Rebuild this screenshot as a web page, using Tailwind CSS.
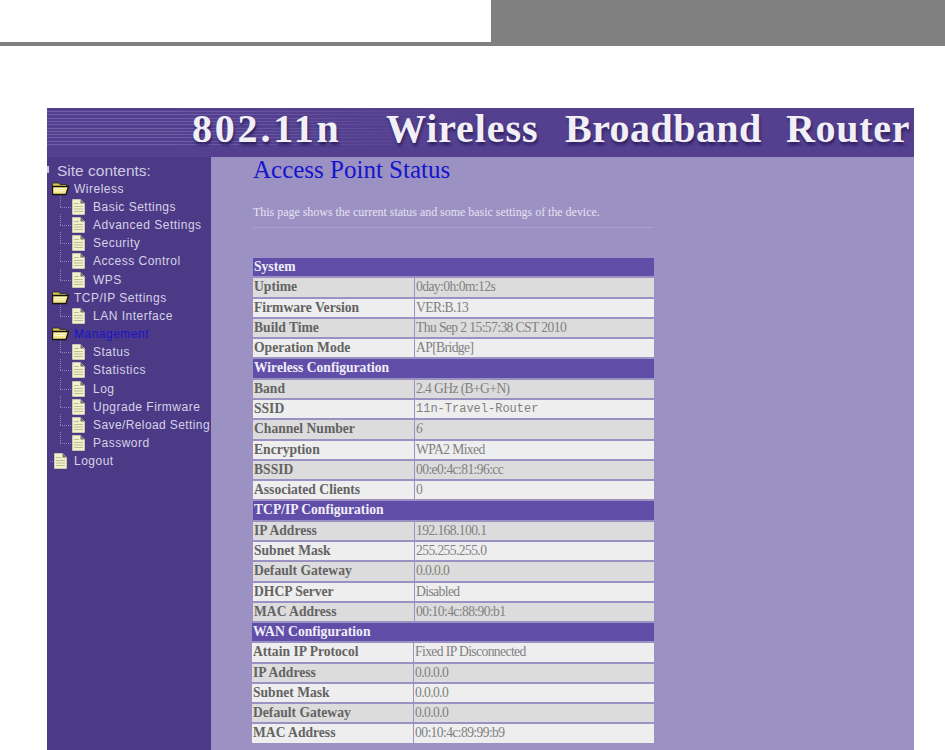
<!DOCTYPE html>
<html lang="en">
  <head>
    <meta charset="UTF-8" />
    <title>Access Point Status</title>
    <script src="https://cdn.jsdelivr.net/npm/@tailwindcss/browser@4"></script>
  </head>
  <body class="bg-white h-[750px] w-[945px] overflow-hidden">
    <svg class="hidden">
      <defs>
        <g id="folder">
          <path d="M0.500 1h6l1.500 1.500h6.500v3H0.500z" fill="#d8c45a" stroke="#2a2410" stroke-width="0.800" />
          <path d="M0.500 4.500h16l-2.500 8H0.500z" fill="#f4e68c" stroke="#17140a" stroke-width="1.300" />
          <path d="M2.500 6.500h11.500M2.500 8.500h10" stroke="#fff8d0" />
        </g>
        <g id="page">
          <path d="M0.500 0.500h8l4 4v11h-12z" fill="#f3f0cc" stroke="#e6e2c0" stroke-width="0.600" />
          <path d="M8.500 0.500v4h4z" fill="#6d6a60" />
          <path d="M2 4.500h5M2 7.500h9M2 10h9M2 12.500h9" stroke="#c0bc94" />
        </g>
      </defs>
    </svg>

    <div class="flex h-[46px]">
      <div class="w-[491px] border-b-4 border-[#808080]"></div>
      <div class="flex-1 bg-[#808080]"></div>
    </div>

    <div class="ml-[47px] mt-[62px] w-[867px] h-[642px] flex flex-col">
      <div class="h-[49px] bg-[#54408f] relative">
        <div class="absolute left-0 top-[3px] h-[36px] w-[420px] bg-[repeating-linear-gradient(180deg,#6f60a8_0px,#6f60a8_1px,transparent_1px,transparent_3.300px)] [mask-image:linear-gradient(90deg,#000_30%,transparent)]"></div>
        <div class="relative flex font-['Liberation_Serif',serif] font-bold text-[40px] leading-[46px] -mt-[2px] h-[46px] text-[#f2f0f6] whitespace-nowrap [text-shadow:1px_3px_3px_#2d2060]">
          <span class="ml-[145px] w-[194px] tracking-[2.800px]">802.11n</span>
          <span class="w-[179px] tracking-[0.900px]">Wireless</span>
          <span class="w-[221px] tracking-[0.450px]">Broadband</span>
          <span class="tracking-[0.700px]">Router</span>
        </div>
      </div>
      <div class="flex flex-1">
        <div class="w-[164px] relative bg-[#4c3a87] overflow-hidden font-['Liberation_Sans',sans-serif] text-[12px] text-[#d6d2e6] tracking-[0.500px] whitespace-nowrap pt-[5px]">
          <div class="absolute left-0 top-[9px] w-[2px] h-[7px] bg-[#cfcae4]"></div>
          <div class="pl-[10px] h-[16px] text-[15.500px] leading-[17px] font-light tracking-normal text-[#cfcae4]">Site contents:</div>

          <div class="flex items-center h-[18.200px] pl-[5px] mt-[1.500px]"><svg class="w-[22px] h-[14px] shrink-0" viewBox="0 0 22 14"><use href="#folder" /></svg>Wireless</div>
          <div class="flex items-center h-[18.200px] pl-[13px]"><svg class="w-[33px] h-[18px] shrink-0 overflow-visible" viewBox="0 0 33 18"><path d="M0.500 -2v12M0 9.500h12" stroke="#8d84b8" stroke-dasharray="1 1" /><use href="#page" x="12" y="1" /></svg>Basic Settings</div>
          <div class="flex items-center h-[18.200px] pl-[13px]"><svg class="w-[33px] h-[18px] shrink-0 overflow-visible" viewBox="0 0 33 18"><path d="M0.500 -2v12M0 9.500h12" stroke="#8d84b8" stroke-dasharray="1 1" /><use href="#page" x="12" y="1" /></svg>Advanced Settings</div>
          <div class="flex items-center h-[18.200px] pl-[13px]"><svg class="w-[33px] h-[18px] shrink-0 overflow-visible" viewBox="0 0 33 18"><path d="M0.500 -2v12M0 9.500h12" stroke="#8d84b8" stroke-dasharray="1 1" /><use href="#page" x="12" y="1" /></svg>Security</div>
          <div class="flex items-center h-[18.200px] pl-[13px]"><svg class="w-[33px] h-[18px] shrink-0 overflow-visible" viewBox="0 0 33 18"><path d="M0.500 -2v12M0 9.500h12" stroke="#8d84b8" stroke-dasharray="1 1" /><use href="#page" x="12" y="1" /></svg>Access Control</div>
          <div class="flex items-center h-[18.200px] pl-[13px]"><svg class="w-[33px] h-[18px] shrink-0 overflow-visible" viewBox="0 0 33 18"><path d="M0.500 -2v12M0 9.500h12" stroke="#8d84b8" stroke-dasharray="1 1" /><use href="#page" x="12" y="1" /></svg>WPS</div>

          <div class="flex items-center h-[18.200px] pl-[5px]"><svg class="w-[22px] h-[14px] shrink-0" viewBox="0 0 22 14"><use href="#folder" /></svg>TCP/IP Settings</div>
          <div class="flex items-center h-[18.200px] pl-[13px]"><svg class="w-[33px] h-[18px] shrink-0 overflow-visible" viewBox="0 0 33 18"><path d="M0.500 -2v12M0 9.500h12" stroke="#8d84b8" stroke-dasharray="1 1" /><use href="#page" x="12" y="1" /></svg>LAN Interface</div>

          <div class="flex items-center h-[18.200px] pl-[5px] text-[#1a14c8]"><svg class="w-[22px] h-[14px] shrink-0" viewBox="0 0 22 14"><use href="#folder" /></svg>Management</div>
          <div class="flex items-center h-[18.200px] pl-[13px]"><svg class="w-[33px] h-[18px] shrink-0 overflow-visible" viewBox="0 0 33 18"><path d="M0.500 -2v12M0 9.500h12" stroke="#8d84b8" stroke-dasharray="1 1" /><use href="#page" x="12" y="1" /></svg>Status</div>
          <div class="flex items-center h-[18.200px] pl-[13px]"><svg class="w-[33px] h-[18px] shrink-0 overflow-visible" viewBox="0 0 33 18"><path d="M0.500 -2v12M0 9.500h12" stroke="#8d84b8" stroke-dasharray="1 1" /><use href="#page" x="12" y="1" /></svg>Statistics</div>
          <div class="flex items-center h-[18.200px] pl-[13px]"><svg class="w-[33px] h-[18px] shrink-0 overflow-visible" viewBox="0 0 33 18"><path d="M0.500 -2v12M0 9.500h12" stroke="#8d84b8" stroke-dasharray="1 1" /><use href="#page" x="12" y="1" /></svg>Log</div>
          <div class="flex items-center h-[18.200px] pl-[13px]"><svg class="w-[33px] h-[18px] shrink-0 overflow-visible" viewBox="0 0 33 18"><path d="M0.500 -2v12M0 9.500h12" stroke="#8d84b8" stroke-dasharray="1 1" /><use href="#page" x="12" y="1" /></svg>Upgrade Firmware</div>
          <div class="flex items-center h-[18.200px] pl-[13px]"><svg class="w-[33px] h-[18px] shrink-0 overflow-visible" viewBox="0 0 33 18"><path d="M0.500 -2v12M0 9.500h12" stroke="#8d84b8" stroke-dasharray="1 1" /><use href="#page" x="12" y="1" /></svg><span class="tracking-[0.400px]">Save/Reload Setting</span></div>
          <div class="flex items-center h-[18.200px] pl-[13px]"><svg class="w-[33px] h-[18px] shrink-0 overflow-visible" viewBox="0 0 33 18"><path d="M0.500 -2v12M0 9.500h12" stroke="#8d84b8" stroke-dasharray="1 1" /><use href="#page" x="12" y="1" /></svg>Password</div>

          <div class="flex items-center h-[18.200px] pl-[3px]"><svg class="w-[24px] h-[18px] shrink-0" viewBox="0 0 24 18"><path d="M0 9.500h5" stroke="#8d84b8" stroke-dasharray="1 1" /><use href="#page" x="4" y="1" /></svg>Logout</div>
        </div>

        <div class="flex-1 bg-[#9b91c3] pl-[42px] overflow-hidden">
          <h1 class="font-['Liberation_Serif',serif] text-[25px] leading-[26px] text-[#1414cc]">Access Point Status</h1>
          <p class="font-['Liberation_Serif',serif] text-[12px] leading-[14px] mt-[22px] text-[#e6e2f2] tracking-[-0.030px] w-[401px] whitespace-nowrap">This page shows the current status and some basic settings of the device.</p>
          <div class="w-[401px] h-px bg-[#a9a0cc] mt-[8px]"></div>

          <div class="w-[401px] mt-[30px] flex flex-col gap-[2px] font-['Liberation_Serif',serif] text-[13.600px] leading-[18px] text-[#636363]">
            <div class="h-[18.290px] bg-[#604ea8] pl-px font-bold text-[#f0eef8]">System</div>
            <div class="h-[18.290px] flex gap-px"><div class="w-[161px] pl-px bg-[#dcdcdc] font-bold">Uptime</div><div class="flex-1 pl-px bg-[#dcdcdc] text-[#808080] tracking-[-0.600px]">0day:0h:0m:12s</div></div>
            <div class="h-[18.290px] flex gap-px"><div class="w-[161px] pl-px bg-[#eeeeee] font-bold">Firmware Version</div><div class="flex-1 pl-px bg-[#eeeeee] text-[#808080] tracking-[-0.600px]">VER:B.13</div></div>
            <div class="h-[18.290px] flex gap-px"><div class="w-[161px] pl-px bg-[#dcdcdc] font-bold">Build Time</div><div class="flex-1 pl-px bg-[#dcdcdc] text-[#808080] tracking-[-0.600px]">Thu Sep 2 15:57:38 CST 2010</div></div>
            <div class="h-[18.290px] flex gap-px"><div class="w-[161px] pl-px bg-[#eeeeee] font-bold">Operation Mode</div><div class="flex-1 pl-px bg-[#eeeeee] text-[#808080] tracking-[-0.600px]">AP[Bridge]</div></div>
            <div class="h-[18.290px] bg-[#604ea8] pl-px font-bold text-[#f0eef8]">Wireless Configuration</div>
            <div class="h-[18.290px] flex gap-px"><div class="w-[161px] pl-px bg-[#dcdcdc] font-bold">Band</div><div class="flex-1 pl-px bg-[#dcdcdc] text-[#808080] tracking-[-0.600px]">2.4 GHz (B+G+N)</div></div>
            <div class="h-[18.290px] flex gap-px"><div class="w-[161px] pl-px bg-[#eeeeee] font-bold">SSID</div><div class="flex-1 pl-px bg-[#eeeeee] text-[#808080] text-[12px] font-['Liberation_Mono',monospace]">11n-Travel-Router</div></div>
            <div class="h-[18.290px] flex gap-px"><div class="w-[161px] pl-px bg-[#dcdcdc] font-bold">Channel Number</div><div class="flex-1 pl-px bg-[#dcdcdc] text-[#808080] italic">6</div></div>
            <div class="h-[18.290px] flex gap-px"><div class="w-[161px] pl-px bg-[#eeeeee] font-bold">Encryption</div><div class="flex-1 pl-px bg-[#eeeeee] text-[#808080] tracking-[-0.600px]">WPA2 Mixed</div></div>
            <div class="h-[18.290px] flex gap-px"><div class="w-[161px] pl-px bg-[#dcdcdc] font-bold">BSSID</div><div class="flex-1 pl-px bg-[#dcdcdc] text-[#808080] tracking-[-0.600px]">00:e0:4c:81:96:cc</div></div>
            <div class="h-[18.290px] flex gap-px"><div class="w-[161px] pl-px bg-[#eeeeee] font-bold">Associated Clients</div><div class="flex-1 pl-px bg-[#eeeeee] text-[#808080] tracking-[-0.600px]">0</div></div>
            <div class="h-[18.290px] bg-[#604ea8] pl-px font-bold text-[#f0eef8]">TCP/IP Configuration</div>
            <div class="h-[18.290px] flex gap-px"><div class="w-[161px] pl-px bg-[#dcdcdc] font-bold">IP Address</div><div class="flex-1 pl-px bg-[#dcdcdc] text-[#808080] tracking-[-0.600px]">192.168.100.1</div></div>
            <div class="h-[18.290px] flex gap-px"><div class="w-[161px] pl-px bg-[#eeeeee] font-bold">Subnet Mask</div><div class="flex-1 pl-px bg-[#eeeeee] text-[#808080] tracking-[-0.600px]">255.255.255.0</div></div>
            <div class="h-[18.290px] flex gap-px"><div class="w-[161px] pl-px bg-[#dcdcdc] font-bold">Default Gateway</div><div class="flex-1 pl-px bg-[#dcdcdc] text-[#808080] tracking-[-0.600px]">0.0.0.0</div></div>
            <div class="h-[18.290px] flex gap-px"><div class="w-[161px] pl-px bg-[#eeeeee] font-bold">DHCP Server</div><div class="flex-1 pl-px bg-[#eeeeee] text-[#808080] tracking-[-0.600px]">Disabled</div></div>
            <div class="h-[18.290px] flex gap-px"><div class="w-[161px] pl-px bg-[#dcdcdc] font-bold">MAC Address</div><div class="flex-1 pl-px bg-[#dcdcdc] text-[#808080] tracking-[-0.600px]">00:10:4c:88:90:b1</div></div>
            <div class="h-[18.290px] -ml-px bg-[#604ea8] pl-px font-bold text-[#f0eef8]">WAN Configuration</div>
            <div class="h-[18.290px] -ml-px flex gap-px"><div class="w-[161px] pl-px bg-[#eeeeee] font-bold">Attain IP Protocol</div><div class="flex-1 pl-px bg-[#eeeeee] text-[#808080] tracking-[-0.600px]">Fixed IP Disconnected</div></div>
            <div class="h-[18.290px] -ml-px flex gap-px"><div class="w-[161px] pl-px bg-[#dcdcdc] font-bold">IP Address</div><div class="flex-1 pl-px bg-[#dcdcdc] text-[#808080] tracking-[-0.600px]">0.0.0.0</div></div>
            <div class="h-[18.290px] -ml-px flex gap-px"><div class="w-[161px] pl-px bg-[#eeeeee] font-bold">Subnet Mask</div><div class="flex-1 pl-px bg-[#eeeeee] text-[#808080] tracking-[-0.600px]">0.0.0.0</div></div>
            <div class="h-[18.290px] -ml-px flex gap-px"><div class="w-[161px] pl-px bg-[#dcdcdc] font-bold">Default Gateway</div><div class="flex-1 pl-px bg-[#dcdcdc] text-[#808080] tracking-[-0.600px]">0.0.0.0</div></div>
            <div class="h-[18.290px] -ml-px flex gap-px"><div class="w-[161px] pl-px bg-[#eeeeee] font-bold">MAC Address</div><div class="flex-1 pl-px bg-[#eeeeee] text-[#808080] tracking-[-0.600px]">00:10:4c:89:99:b9</div></div>
          </div>
        </div>
      </div>
    </div>
  </body>
</html>
